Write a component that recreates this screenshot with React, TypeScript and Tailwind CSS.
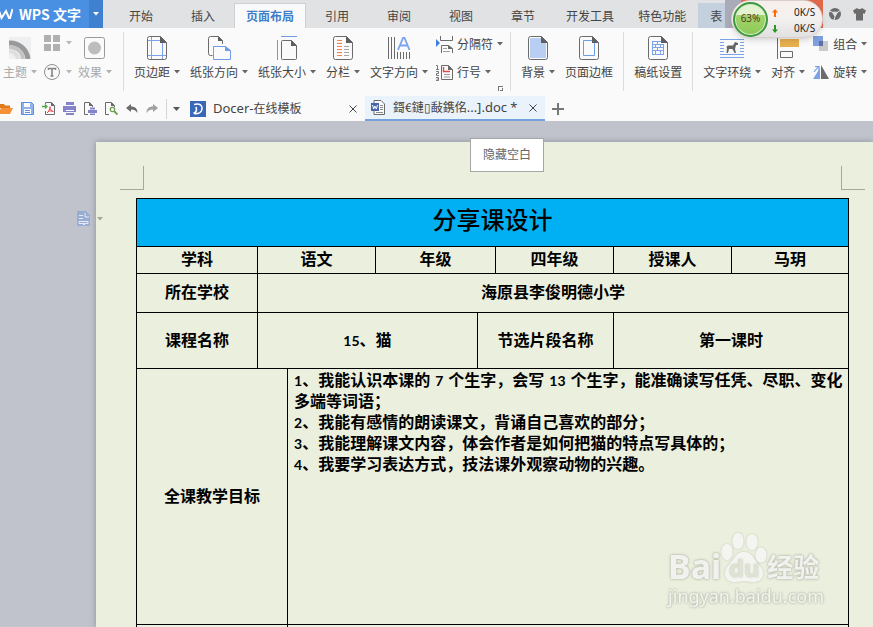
import type { ReactNode } from "react";
import { clsx } from "clsx";

const MENU_TABS = ["开始", "插入", "页面布局", "引用", "审阅", "视图", "章节", "开发工具", "特色功能"];

const GOALS = [
  <>
    <Num>1</Num>、我能认识本课的<Num spaced>7</Num>个生字，会写<Num spaced>13</Num>个生字，能准确读写任凭、尽职、变化多端等词语；
  </>,
  <>
    <Num>2</Num>、我能有感情的朗读课文，背诵自己喜欢的部分；
  </>,
  <>
    <Num>3</Num>、我能理解课文内容，体会作者是如何把猫的特点写具体的；
  </>,
  <>
    <Num>4</Num>、我要学习表达方式，技法课外观察动物的兴趣。
  </>,
];

function Num({ children, spaced }: { children: ReactNode; spaced?: boolean }) {
  return <span className={clsx("font-[Lato] text-sm leading-none", spaced && "mx-[5px]")}>{children}</span>;
}

function Caret({ className = "text-[#666]" }: { className?: string }) {
  return (
    <svg width="6" height="4" viewBox="0 0 6 4" className={clsx("shrink-0", className)} fill="currentColor" aria-hidden>
      <path d="M0 0h6L3 3.6z" />
    </svg>
  );
}

function Svg({ w, h, children, className }: { w: number; h: number; children: ReactNode; className?: string }) {
  return (
    <svg width={w} height={h} viewBox={`0 0 ${w} ${h}`} fill="none" className={clsx("shrink-0", className)} aria-hidden>
      {children}
    </svg>
  );
}

/* Page outline with a folded corner, shared by most ribbon icons */
function Sheet({ children }: { children?: ReactNode }) {
  return (
    <Svg w={20} h={24}>
      {children}
      <path d="M13.5.5h-11a2 2 0 0 0-2 2v19a2 2 0 0 0 2 2h15a2 2 0 0 0 2-2V6.500z" stroke="#6b6b6b" />
      <path d="M13 0v7h7z" fill="#5f5f5f" />
    </Svg>
  );
}

function BigButton({ icon, label, caret, disabled }: { icon: ReactNode; label: string; caret?: boolean; disabled?: boolean }) {
  return (
    <button disabled={disabled} className={clsx("flex flex-col items-center gap-0.5", disabled && "text-[#a8a8a8]")}>
      <span className="flex h-6 items-center">{icon}</span>
      <span className="flex items-center gap-1 leading-5 whitespace-nowrap">
        {label}
        {caret && <Caret className={disabled ? "text-[#b0b0b0]" : "text-[#666]"} />}
      </span>
    </button>
  );
}

function SmallButton({ icon, label }: { icon: ReactNode; label: string }) {
  return (
    <button className="flex h-5 items-center gap-1 whitespace-nowrap">
      {icon}
      {label}
      <Caret />
    </button>
  );
}

function Group({ children, last, tight }: { children: ReactNode; last?: boolean; tight?: boolean }) {
  return (
    <div
      className={clsx(
        "flex h-[59px] shrink-0 items-start gap-2.5 pt-1 pl-2.5",
        tight ? "pr-[7px]" : "pr-2.5",
        !last && "border-r border-[#dcdcdc]"
      )}
    >
      {children}
    </div>
  );
}

function TitleBar() {
  return (
    <header className="flex h-7 shrink-0 bg-[#e1e2e4]">
      <button className="flex w-[89px] shrink-0 items-center gap-1.5 bg-[#4a90e2] text-sm font-bold whitespace-nowrap text-white">
        <Svg w={13} h={14}>
          <path d="M-2 1l3.500 10L6 4l3 7h1l2.500-9" stroke="#fff" strokeWidth="2" />
        </Svg>
        WPS 文字
      </button>
      <button aria-label="菜单" className="flex w-3.5 shrink-0 items-center justify-center bg-[#3f80cf]">
        <Caret className="text-white" />
      </button>
      <nav className="flex shrink-0 items-end pl-[7px]">
        {MENU_TABS.map((tab) => (
          <button
            key={tab}
            className={clsx(
              "h-[25px] whitespace-nowrap",
              tab === "页面布局"
                ? "border border-b-0 border-[#cfd0d2] bg-[#fafafa] px-[11px] font-bold text-[#3f7ecb]"
                : tab.length > 2 ? "px-3" : "px-[19px]"
            )}
          >
            {tab}
          </button>
        ))}
        <button className="h-[25px] w-[27px] bg-[#c5d0df] pl-3 text-left whitespace-nowrap">表</button>
        <span className="h-7 w-4 bg-[#a9acb8]" />
      </nav>
      <button className="w-[82px] shrink-0 bg-[#e0694b] text-[#fbe9e4]">登录</button>
      <div className="flex flex-1 items-center gap-3 pl-1.5">
        <Svg w={12} h={12}>
          <circle cx="6" cy="6" r="6" fill="#6b6b6b" />
          <path d="M3.500 4.200h5L6 8.500zM0 3l3.500 1.200M12 2L8.500 4.200M6 8.500L5 12" stroke="#e1e2e4" fill="#e1e2e4" />
        </Svg>
        <Svg w={13} h={13}>
          <path d="M4 0c1 1.500 4 1.500 5 0l4 2.500-1.500 3.500L10 5.200V12.500H3V5.200L1.500 6 0 2.500z" fill="#6b6b6b" />
        </Svg>
      </div>
    </header>
  );
}

function NetSpeed() {
  return (
    <aside className="absolute top-0 left-[731px] z-20 flex h-[38px] w-[92px] items-center rounded-full border border-[#d8cfcc] bg-linear-to-b from-[#f8efec] via-[#f3f1f0] to-[#e2e0e0] pl-px font-['Noto_Sans'] text-[10px] text-[#222] shadow-md">
      <span className="flex size-[35px] shrink-0 items-center justify-center rounded-full border-2 border-[#3c9a3c] bg-linear-to-b from-[#e3f3cf] from-35% via-[#a2d46c] via-36% to-[#8cca55] text-[10px] text-[#5a3b20] ring-1 ring-[#d9e8d2] ring-inset">
        63%
      </span>
      <span className="flex flex-col gap-1 pt-1 pl-1">
        {[true, false].map((up) => (
          <span key={String(up)} className="flex h-3 items-center gap-4">
            <Svg w={6} h={8} className={up ? "text-[#ff6a00]" : "rotate-180 text-[#2a972a]"}>
              <path d="M3 0l3 3.500H4V8H2V3.500H0z" fill="currentColor" />
            </Svg>
            <span className="whitespace-nowrap">0K/S</span>
          </span>
        ))}
      </span>
    </aside>
  );
}

function Ribbon() {
  return (
    <div className="flex h-[65px] shrink-0 pt-1">
      <div className="flex h-[59px] w-[124px] shrink-0 justify-between border-r border-[#dcdcdc] pt-1 pr-[11px] pl-[3px]">
        <BigButton
          disabled
          caret
          label="主题"
          icon={
            <Svg w={22} h={22}>
              <path d="M0 0h22v22H0z" fill="#eeeff1" />
              <path d="M0 6a18 18 0 0 1 19 16" stroke="#999" strokeWidth="5" />
              <path d="M0 10a13 13 0 0 1 14 12" stroke="#c4c4c4" strokeWidth="4" />
              <path d="M0 14a9 9 0 0 1 9 8" stroke="#dedede" strokeWidth="4" />
            </Svg>
          }
        />
        <div className="-mt-px flex flex-col gap-[13px]">
          <button disabled aria-label="颜色" className="flex h-4 items-center gap-1.5">
            <Svg w={16} h={16}>
              <path d="M0 0h7v7H0zM9 0h7v7H9zM0 9h7v7H0zM9 9h7v7H9z" fill="#b0b0b0" />
            </Svg>
            <Caret className="text-[#b8b8b8]" />
          </button>
          <button disabled aria-label="字体" className="flex h-4 items-center gap-1.5">
            <Svg w={16} h={16}>
              <circle cx="8" cy="8" r="7.500" stroke="#8f8f8f" />
              <path d="M4.500 6V4.500h7V6M8 4.500V12M6.500 12h3" stroke="#858585" strokeWidth="1.600" />
            </Svg>
            <Caret className="text-[#b8b8b8]" />
          </button>
        </div>
        <BigButton
          disabled
          caret
          label="效果"
          icon={
            <Svg w={21} h={22}>
              <rect x=".5" y=".5" width="20" height="21" rx="2" stroke="#999" />
              <circle cx="10.500" cy="11" r="6.500" fill="#bdbdbd" />
            </Svg>
          }
        />
      </div>
      <Group tight>
        <BigButton
          caret
          label="页边距"
          icon={
            <Sheet>
              <path d="M4.500 1v22M15.500 6v17M1 4.500h13M1 19.500h18" stroke="#7ba4e8" />
            </Sheet>
          }
        />
        <BigButton
          caret
          label="纸张方向"
          icon={
            <Svg w={23} h={24}>
              <path d="M4.500 19.500h-2a2 2 0 0 1-2-2v-15a2 2 0 0 1 2-2h8l4 4V8" stroke="#6b6b6b" />
              <path d="M10 0v5h5z" fill="#5f5f5f" />
              <path d="M5.500 10.500h12l5 4v9h-17z" stroke="#6f9ce6" fill="#fafafa" />
              <path d="M17 10v5h6z" fill="#6f9ce6" />
            </Svg>
          }
        />
        <BigButton
          caret
          label="纸张大小"
          icon={
            <Svg w={20} h={24}>
              <path d="M4 .5h16M.5 4v20" stroke="#6f9ce6" />
              <path d="M14.500 4.500h-9a1 1 0 0 0-1 1v17a1 1 0 0 0 1 1h13a1 1 0 0 0 1-1v-13z" stroke="#6b6b6b" />
              <path d="M14 4v6h6z" fill="#5f5f5f" />
            </Svg>
          }
        />
        <BigButton
          caret
          label="分栏"
          icon={
            <Sheet>
              <path d="M4 4.500h5M4 7.500h5M4 10.500h5M4 13.500h5M4 16.500h5M4 19.500h5" stroke="#f0824a" />
              <path d="M11 10.500h5M11 13.500h5M11 16.500h5M11 19.500h5" stroke="#a5a5a5" />
            </Sheet>
          }
        />
        <BigButton
          caret
          label="文字方向"
          icon={
            <Svg w={23} h={24}>
              <path d="M.5 1v22M3.500 1v22M6.500 1v22M9.500 16v7M12.500 16v7M15.500 16v7M18.500 16v7M21.500 16v7" stroke="#6b6b6b" />
              <path d="M10 14l5-12h1.500l5 12M12 9.500h8" stroke="#7ba4f0" strokeWidth="1.800" />
            </Svg>
          }
        />
        <div className="-mt-0.5 -ml-0.5 flex flex-col gap-2">
          <SmallButton
            label="分隔符"
            icon={
              <Svg w={17} h={17}>
                <path d="M0 3l4 4-4 4z" fill="#3f7edc" />
                <path d="M4.500 0v4.500h12V0M5.500 17V9.500h7l4 3V17" stroke="#6b6b6b" />
                <path d="M12 9v4h5z" fill="#6b6b6b" />
                <path d="M7 12.500h4M7 15.500h7" stroke="#a0a0a0" />
              </Svg>
            }
          />
          <SmallButton
            label="行号"
            icon={
              <Svg w={17} h={17}>
                <path d="M0 1.500h1.500V5M0 5.500h3M0 7.500h2.500v2H.5v2H3M0 13.500h2.500v3H0M.5 15h2" stroke="#6b6b6b" strokeWidth=".9" />
                <path d="M5.500 1.500h7l4 4v10h-11z" stroke="#6b6b6b" />
                <path d="M12 1v5h5z" fill="#6b6b6b" />
                <path d="M7.500 3v4.500H14" stroke="#e5484d" strokeWidth="1.400" />
                <path d="M8 10.500h6M8 13h6" stroke="#999" />
              </Svg>
            }
          />
          <button aria-label="页面设置" className="-mt-1 self-end">
            <Svg w={5} h={5}>
              <path d="M0 .5h5M.5 0v5M4.500 2v3M2 4.500h3" stroke="#777" />
            </Svg>
          </button>
        </div>
      </Group>
      <Group>
        <BigButton
          caret
          label="背景"
          icon={
            <Sheet>
              <path d="M2 2h11v5h5v15H2z" fill="#b9cef3" />
            </Sheet>
          }
        />
        <BigButton
          label="页面边框"
          icon={
            <Sheet>
              <path d="M4.500 4.500h11v15h-11z" stroke="#6f9ce6" />
            </Sheet>
          }
        />
      </Group>
      <Group>
        <BigButton
          label="稿纸设置"
          icon={
            <Sheet>
              <path d="M4 5.500h9M4 8.500h12M4 11.500h12M4 14.500h12M4 18.500h12M4.500 5v13M9.500 5v3M7.500 8v3M12.500 8v3M9.500 11v3M7.500 14v4M12.500 14v4M15.500 8v10" stroke="#7ba4e8" />
            </Sheet>
          }
        />
      </Group>
      <Group last>
        <BigButton
          caret
          label="文字环绕"
          icon={
            <Svg w={24} h={20}>
              <path d="M0 1.500h24M0 4.500h4M20 4.500h4M0 7.500h4M20 7.500h4M0 10.500h4M20 10.500h4M0 13.500h4M20 13.500h4M0 16.500h24M0 19.500h24" stroke="#7ba4e8" />
              <path d="M6 9l2-1.500h5l2-3.500 3 1v2h-2l-1 4 1 4h-1.500l-2-4H9l-1 4H6.500l.5-5.500z" fill="#666" />
            </Svg>
          }
        />
        <BigButton
          caret
          label="对齐"
          icon={
            <Svg w={22} h={22}>
              <path d="M.5 0v22" stroke="#6b6b6b" />
              <path d="M3 2h19v8H3z" fill="#e8b04e" />
              <path d="M3.500 14.500h12v6h-12z" stroke="#6b6b6b" />
            </Svg>
          }
        />
        <div className="-mt-0.5 -ml-0.5 flex flex-col gap-2">
          <SmallButton
            label="组合"
            icon={
              <Svg w={16} h={16}>
                <path d="M6 5h9v10H6z" fill="#c9c9c9" />
                <path d="M0 0h10v10H0z" fill="#7f9fe0" />
                <path d="M6 5h4v5H6z" fill="#5d6fa5" />
              </Svg>
            }
          />
          <SmallButton
            label="旋转"
            icon={
              <Svg w={16} h={16}>
                <path d="M7 4v11H0z" fill="#7ba4e8" />
                <path d="M8 1v14h8z" fill="#6b6b6b" />
                <path d="M1 8l4-5M2 2.500h4v4" stroke="#6f9ce6" strokeWidth="1.200" />
              </Svg>
            }
          />
        </div>
      </Group>
    </div>
  );
}

const QUICK_ACTIONS: { name: string; icon: ReactNode }[] = [
  {
    name: "打开",
    icon: (
      <Svg w={13} h={13}>
        <path d="M0 2h4l1 1.500h5V6H0z" fill="#e07b1c" />
        <path d="M1 6h12l-3 6H0V8z" fill="#f79135" />
      </Svg>
    ),
  },
  {
    name: "保存",
    icon: (
      <Svg w={13} h={13}>
        <path d="M.5.5h10l2 2v10H.5z" stroke="#5b8fe0" fill="#8fb3ee" />
        <path d="M3 1h6v4H3zM3 7h7v5H3z" fill="#fff" />
        <path d="M4 8.500h5M4 10.500h5" stroke="#5b8fe0" />
      </Svg>
    ),
  },
  {
    name: "输出为PDF",
    icon: (
      <Svg w={13} h={13}>
        <path d="M3.500 2V.5h6l3 3v9h-9V9" stroke="#6b6b6b" />
        <path d="M9 0v4h4z" fill="#6b6b6b" />
        <path d="M0 4.500h4M3 2.500l2 2-2 2" stroke="#55a344" strokeWidth="1.300" />
        <path d="M8 4.500c0 3-1.500 5-3 6.500M8 5c0 2.500 1.500 4 3.500 4.500M6 9.500c1.500-.7 3.500-.7 5 0" stroke="#e5484d" />
      </Svg>
    ),
  },
  {
    name: "打印",
    icon: (
      <Svg w={13} h={13}>
        <path d="M3 0h8v3H3zM0 4h13v6H0zM3 11h8v2H3z" fill="#8583c9" />
        <path d="M3 8.500h8" stroke="#fff" />
      </Svg>
    ),
  },
  {
    name: "打印设置",
    icon: (
      <Svg w={13} h={13}>
        <path d="M4 12.500H.5V.5h5l3 3V5" stroke="#6b6b6b" />
        <path d="M5 0v4h4z" fill="#6b6b6b" />
        <path d="M6 5.500h5v2H6zM4 8h9v3H4zM6 11.500h5V13H6z" fill="#8583c9" />
      </Svg>
    ),
  },
  {
    name: "打印预览",
    icon: (
      <Svg w={13} h={13}>
        <path d="M4 12.500H.5V.5h6l3 3V5" stroke="#6b6b6b" />
        <path d="M6 0v4h4z" fill="#6b6b6b" />
        <circle cx="7.500" cy="7.500" r="2.200" stroke="#6a9e4f" strokeWidth="1.200" />
        <path d="M9 9l3.500 3.500" stroke="#6a9e4f" strokeWidth="1.800" />
      </Svg>
    ),
  },
];

function TabBar() {
  return (
    <div className="flex h-7 shrink-0 items-end">
      <div className="flex h-[25px] shrink-0 items-center gap-2">
        {QUICK_ACTIONS.map((a) => (
          <button key={a.name} aria-label={a.name}>
            {a.icon}
          </button>
        ))}
        <button aria-label="撤销">
          <Svg w={12} h={13}>
            <path d="M0 6l5-4v2.500c4 0 6.500 2 6.500 6.500C10 8.500 8 7.500 5 7.500V10z" fill="#6b6b6b" />
          </Svg>
        </button>
        <button aria-label="恢复">
          <Svg w={12} h={13}>
            <path d="M12 6L7 2v2.500C3 4.500.5 6.500.5 11 2 8.500 4 7.500 7 7.500V10z" fill="#a0a0a0" />
          </Svg>
        </button>
        <button aria-label="更多" className="flex h-5 items-center border-l border-[#d5d5d5] pl-1.5">
          <Svg w={7} h={4}>
            <path d="M0 0h7L3.500 4z" fill="#555" />
          </Svg>
        </button>
      </div>
      <div className="flex h-[25px] w-[185px] shrink-0 items-center gap-[7px] pr-2 pl-2.5">
        <Svg w={16} h={16}>
          <path d="M0 0h16v16H0z" fill="#3a68b8" />
          <path d="M4 3.500c6-1.500 8.500 1 8 4.500-.5 3.500-4 5-8 4.500M3.500 12c3-.5 3.500-3 2.500-6" stroke="#fff" strokeWidth="1.600" />
        </Svg>
        <a href="#docer" className="flex-1 whitespace-nowrap">
          <span className="font-['Noto_Sans'] text-[13px]">Docer-</span>在线模板
        </a>
        <CloseButton />
      </div>
      <div className="flex h-[25px] w-[180px] shrink-0 items-center gap-2 border-b-2 border-[#76a2dc] bg-[#eaf2fb] pr-2 pl-1.5">
        <Svg w={14} h={15}>
          <path d="M3 .5h7l3.500 3.500v10.500H3z" fill="#fafafa" stroke="#6b6b6b" />
          <path d="M9 5.500h3M9 7.500h3M9 9.500h3M5 12.500h7" stroke="#8a8a8a" />
          <path d="M0 3h8v8H0z" fill="#4a66a8" />
          <path d="M1.500 5l1.200 4L4 6l1.300 3 1.200-4" stroke="#fff" />
        </Svg>
        <a href="#doc" className="flex-1 whitespace-nowrap">
          鎶€鏈▯敮鎸佲<span className="font-['Noto_Sans'] text-[13px]">...].doc *</span>
        </a>
        <CloseButton />
      </div>
      <button aria-label="新建" className="flex h-[25px] items-center pl-[7px]">
        <Svg w={12} h={12}>
          <path d="M6 0v12M0 6h12" stroke="#777" strokeWidth="2" />
        </Svg>
      </button>
    </div>
  );
}

function CloseButton() {
  return (
    <button aria-label="关闭">
      <Svg w={8} h={8}>
        <path d="M.5.5l7 7M7.500.5l-7 7" stroke="#444" />
      </Svg>
    </button>
  );
}

function Watermark() {
  return (
    <div className="absolute right-6 bottom-4 flex flex-col font-['Noto_Sans'] text-white/80 [text-shadow:0_0_2px_#b9bdae] drop-shadow-[0_0_1px_#b9bdae]">
      <div className="flex items-end">
        <span className="text-[34px] leading-9 font-bold">Bai</span>
        <div className="relative">
          <svg width="46" height="52" viewBox="0 0 46 52" fill="currentColor" aria-hidden>
            <ellipse cx="6" cy="20" rx="5.500" ry="8" />
            <ellipse cx="17" cy="9" rx="5.500" ry="8" />
            <ellipse cx="31" cy="10" rx="5.500" ry="8" />
            <ellipse cx="40" cy="23" rx="5.500" ry="7.500" />
            <path d="M23 20c8 0 10 8 16 14 6 7 2 16-6 16-5 0-7-1-10-1s-5 1-10 1c-8 0-12-9-6-16 6-6 8-14 16-14z" />
          </svg>
          <span className="absolute inset-x-0 bottom-1 text-center text-2xl leading-6 font-bold text-[#dfe3d2]">du</span>
        </div>
        <span className="font-['Noto_Sans_CJK_SC'] text-[26px] leading-9 font-bold">经验</span>
      </div>
      <span className="text-lg leading-6 font-normal">jingyan.baidu.com</span>
    </div>
  );
}

const CELL = "border border-black p-0";

function LessonTable() {
  return (
    <table className="w-full table-fixed border-collapse text-center text-base leading-[21px] font-bold text-black">
      <colgroup>
        <col className="w-[121px]" />
        <col className="w-[30px]" />
        <col className="w-[88px]" />
        <col className="w-[102px]" />
        <col className="w-[18px]" />
        <col className="w-[118px]" />
        <col className="w-[118px]" />
        <col className="w-[117px]" />
      </colgroup>
      <tbody>
        <tr className="h-12">
          <th colSpan={8} className={clsx(CELL, "bg-[#00b0f3] pb-2 text-2xl leading-8 font-medium")}>
            分享课设计
          </th>
        </tr>
        <tr className="h-[27px]">
          <td className={clsx(CELL, "pb-1")}>学科</td>
          <td colSpan={2} className={clsx(CELL, "pb-1")}>语文</td>
          <td colSpan={2} className={clsx(CELL, "pb-1")}>年级</td>
          <td className={clsx(CELL, "pb-1")}>四年级</td>
          <td className={clsx(CELL, "pb-1")}>授课人</td>
          <td className={clsx(CELL, "pb-1")}>马玥</td>
        </tr>
        <tr className="h-[39px]">
          <td className={clsx(CELL, "pb-1")}>所在学校</td>
          <td colSpan={7} className={clsx(CELL, "pb-1")}>海原县李俊明德小学</td>
        </tr>
        <tr className="h-14">
          <td className={clsx(CELL, "pb-0.5")}>课程名称</td>
          <td colSpan={3} className={clsx(CELL, "pb-0.5")}>
            <Num>15</Num>、猫
          </td>
          <td colSpan={2} className={clsx(CELL, "pb-0.5")}>节选片段名称</td>
          <td colSpan={2} className={clsx(CELL, "pb-0.5")}>第一课时</td>
        </tr>
        <tr className="h-64">
          <td colSpan={2} className={clsx(CELL, "pb-0.5")}>全课教学目标</td>
          <td colSpan={6} className={clsx(CELL, "relative pr-1 pl-1.5 text-left align-top")}>
            {GOALS.map((goal, i) => (
              <p key={i}>{goal}</p>
            ))}
            <Watermark />
          </td>
        </tr>
        <tr className="h-64">
          <td colSpan={2} className={CELL} />
          <td colSpan={6} className={CELL} />
        </tr>
      </tbody>
    </table>
  );
}

export default function App() {
  return (
    <div className="relative flex h-screen flex-col overflow-hidden bg-[#fafafa] font-['Noto_Sans_CJK_SC',sans-serif] text-xs text-[#444]">
      <TitleBar />
      <NetSpeed />
      <Ribbon />
      <TabBar />
      <main className="flex min-h-0 flex-1 overflow-hidden bg-[#c0c3cc]">
        <div className="relative w-24 shrink-0 pt-[90px] pl-[77px]">
          <button aria-label="段落布局">
            <Svg w={13} h={15}>
              <path d="M0 0h9l4 4v11H0z" fill="#98add3" />
              <path d="M2 4.500h4M2 7.500h4M2 10.500h9v2H2zM8 2v4h4M6 13.500h2" stroke="#e4eaf4" />
            </Svg>
          </button>
          <Caret className="absolute top-24 left-[97px] z-10 text-[#a5a79c]" />
        </div>
        <div className="relative mt-[21px] min-w-0 flex-1 bg-[#ebefde] pr-6 pl-10 shadow-[0_0_6px_#8b8e98]">
          <button className="absolute -top-1 left-[374px] h-[34px] w-[74px] border border-[#a6a6a6] bg-white pb-0.5 text-[#666]">
            隐藏空白
          </button>
          <div className="-mr-4 -ml-4 flex justify-between pt-6">
            <span className="size-6 border-r border-b border-[#a6a89e]" />
            <span className="size-6 border-b border-l border-[#a6a89e]" />
          </div>
          <div className="pt-2">
            <LessonTable />
          </div>
        </div>
      </main>
    </div>
  );
}
